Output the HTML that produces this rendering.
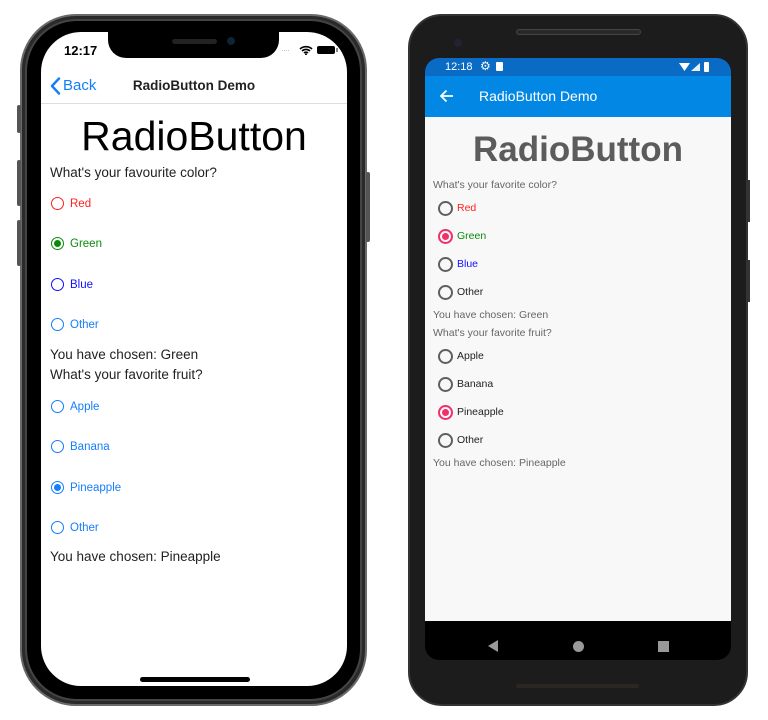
<!DOCTYPE html>
<html><head><meta charset="utf-8"><style>
*{margin:0;padding:0;box-sizing:border-box}
body{width:768px;height:720px;background:#fff;position:relative;overflow:hidden;font-family:"Liberation Sans",Arial,sans-serif}
.a{position:absolute;white-space:nowrap}
.r{position:absolute;border-radius:50%}
</style></head><body>
<!-- iPhone -->
<div class="a" style="left:20px;top:14px;width:347px;height:692px;border-radius:56px;background:#2a2a2a;border:2px solid #6a6a6a"></div>
<div class="a" style="left:25px;top:19px;width:337px;height:682px;border-radius:52px;background:#000;border:2px solid #444"></div>
<div class="a" style="left:17px;top:105px;width:4px;height:28px;background:#555;border-radius:2px"></div>
<div class="a" style="left:17px;top:160px;width:4px;height:46px;background:#555;border-radius:2px"></div>
<div class="a" style="left:17px;top:220px;width:4px;height:46px;background:#555;border-radius:2px"></div>
<div class="a" style="left:366px;top:172px;width:4px;height:70px;background:#555;border-radius:2px"></div>
<div class="a" style="left:41px;top:32px;width:306px;height:654px;border-radius:40px;background:#fff;overflow:hidden">
 <div class="a" style="left:67px;top:-2px;width:171px;height:28px;background:#000;border-radius:0 0 18px 18px"></div>
 <div class="a" style="left:131px;top:7px;width:45px;height:5px;background:#222;border-radius:3px"></div>
 <div class="a" style="left:186px;top:5px;width:8px;height:8px;background:#123;border-radius:50%"></div>
 <div class="a" style="left:23px;top:11px;font-size:13px;font-weight:bold">12:17</div>
 <div class="a" style="left:240px;top:13px;font-size:9px;color:#bbb;letter-spacing:-1px">····</div>
 <svg class="a" style="left:258px;top:13px" width="14" height="10" viewBox="0 0 14 10"><path d="M1 4a9 9 0 0 1 12 0M3 6a6 6 0 0 1 8 0M5 8a3 3 0 0 1 4 0" stroke="#000" stroke-width="1.6" fill="none"/><circle cx="7" cy="9.3" r="1" fill="#000"/></svg>
 <div class="a" style="left:276px;top:14px;width:18px;height:8px;background:#000;border-radius:2px"></div>
 <div class="a" style="left:295px;top:16px;width:2px;height:4px;background:#888"></div>
 <svg class="a" style="left:8px;top:45px" width="12" height="18"><path d="M10 1.5L3 9l7 7.5" stroke="#147efb" stroke-width="2.4" fill="none" stroke-linecap="round" stroke-linejoin="round"/></svg>
 <div class="a" style="left:22px;top:45px;font-size:15px;color:#147efb">Back</div>
 <div class="a" style="left:0;width:306px;text-align:center;top:46px;font-size:13.5px;font-weight:bold;color:#222">RadioButton Demo</div>
 <div class="a" style="left:0;top:71px;width:306px;height:1px;background:#ddd"></div>
 <div class="a" style="left:0;width:306px;text-align:center;top:80px;font-size:41px;line-height:48px;color:#000">RadioButton</div>
 <div class="a" style="left:9px;top:133px;font-size:13.5px;color:#222">What's your favourite color?</div>
</div>
<!-- iOS radios (page coords) -->
<div class="r" style="left:51px;top:197px;width:13px;height:13px;border:1.7px solid #ff2020"></div>
<div class="a" style="left:70px;top:198px;font-size:11.5px;color:#ff2020">Red</div>
<div class="r" style="left:51px;top:237px;width:13px;height:13px;border:1.7px solid #0a8a0a"></div><div class="r" style="left:54px;top:240px;width:7px;height:7px;background:#0a8a0a"></div>
<div class="a" style="left:70px;top:238px;font-size:11.5px;color:#0a8a0a">Green</div>
<div class="r" style="left:51px;top:278px;width:13px;height:13px;border:1.7px solid #1010ff"></div>
<div class="a" style="left:70px;top:279px;font-size:11.5px;color:#1010ff">Blue</div>
<div class="r" style="left:51px;top:318px;width:13px;height:13px;border:1.7px solid #147efb"></div>
<div class="a" style="left:70px;top:319px;font-size:11.5px;color:#147efb">Other</div>
<div class="a" style="left:50px;top:347px;font-size:13.5px;color:#222">You have chosen: Green</div>
<div class="a" style="left:50px;top:367px;font-size:13.5px;color:#222">What's your favorite fruit?</div>
<div class="r" style="left:51px;top:400px;width:13px;height:13px;border:1.7px solid #147efb"></div>
<div class="a" style="left:70px;top:401px;font-size:11.5px;color:#147efb">Apple</div>
<div class="r" style="left:51px;top:440px;width:13px;height:13px;border:1.7px solid #147efb"></div>
<div class="a" style="left:70px;top:441px;font-size:11.5px;color:#147efb">Banana</div>
<div class="r" style="left:51px;top:481px;width:13px;height:13px;border:1.7px solid #147efb"></div><div class="r" style="left:54px;top:484px;width:7px;height:7px;background:#147efb"></div>
<div class="a" style="left:70px;top:482px;font-size:11.5px;color:#147efb">Pineapple</div>
<div class="r" style="left:51px;top:521px;width:13px;height:13px;border:1.7px solid #147efb"></div>
<div class="a" style="left:70px;top:522px;font-size:11.5px;color:#147efb">Other</div>
<div class="a" style="left:50px;top:549px;font-size:13.5px;color:#222">You have chosen: Pineapple</div>
<div class="a" style="left:140px;top:677px;width:110px;height:5px;background:#000;border-radius:3px"></div>

<!-- Android -->
<div class="a" style="left:408px;top:14px;width:340px;height:692px;border-radius:34px;background:#1c1c1c;border:2px solid #333"></div>
<div class="a" style="left:746px;top:180px;width:4px;height:42px;background:#333"></div>
<div class="a" style="left:746px;top:260px;width:4px;height:42px;background:#333"></div>
<div class="a" style="left:516px;top:29px;width:125px;height:6px;background:#2a2a2a;border-radius:3px;border:1px solid #444"></div>
<div class="a" style="left:454px;top:39px;width:8px;height:8px;background:#223;border-radius:50%"></div>
<div class="a" style="left:516px;top:684px;width:123px;height:4px;background:#2a2622;border-radius:2px"></div>
<div class="a" style="left:425px;top:58px;width:306px;height:602px;border-radius:14px;background:#000;overflow:hidden">
 <div class="a" style="left:0;top:0;width:306px;height:18px;background:#0a6bc4"></div>
 <div class="a" style="left:20px;top:3px;font-size:11px;color:#fff">12:18</div>
 <div class="a" style="left:55px;top:1px;font-size:12px;color:#fff">⚙</div>
 <div class="a" style="left:71px;top:4px;width:7px;height:9px;background:#fff;border-radius:1px"></div>
 <svg class="a" style="left:254px;top:4px" width="30" height="11"><path d="M0 1h11L5.5 9z" fill="#fff"/><path d="M12 9h9V1z" fill="#fff" opacity=".9"/><rect x="25" y="0" width="5" height="10" rx="1" fill="#fff"/></svg>
 <div class="a" style="left:0;top:18px;width:306px;height:41px;background:#0288e4"></div>
 <svg class="a" style="left:14px;top:30px" width="16" height="16"><path d="M14 8H2M7.5 2.5L2 8l5.5 5.5" stroke="#fff" stroke-width="1.8" fill="none"/></svg>
 <div class="a" style="left:54px;top:30px;font-size:14px;color:#fff">RadioButton Demo</div>
 <div class="a" style="left:0;top:59px;width:306px;height:504px;background:#f8f8f8"></div>
 <svg class="a" style="left:62px;top:581px" width="14" height="14"><path d="M11 1v12L1 7z" fill="#999"/></svg>
 <div class="r" style="left:148px;top:583px;width:11px;height:11px;background:#999"></div>
 <div class="a" style="left:233px;top:583px;width:11px;height:11px;background:#999"></div>
</div>
<div class="a" style="left:425px;top:128px;width:306px;text-align:center;font-size:35px;font-weight:bold;color:#5c5c5c;line-height:44px">RadioButton</div>
<div class="a" style="left:433px;top:179px;font-size:10.5px;color:#666">What's your favorite color?</div>
<div class="r" style="left:438px;top:201px;width:15px;height:15px;border:2px solid #5f5f5f"></div>
<div class="a" style="left:457px;top:202px;font-size:10.5px;color:#ff1f1f">Red</div>
<div class="r" style="left:438px;top:229px;width:15px;height:15px;border:2px solid #f0306a"></div><div class="r" style="left:442px;top:233px;width:7px;height:7px;background:#f0306a"></div>
<div class="a" style="left:457px;top:230px;font-size:10.5px;color:#0a8a0a">Green</div>
<div class="r" style="left:438px;top:257px;width:15px;height:15px;border:2px solid #5f5f5f"></div>
<div class="a" style="left:457px;top:258px;font-size:10.5px;color:#1010ff">Blue</div>
<div class="r" style="left:438px;top:285px;width:15px;height:15px;border:2px solid #5f5f5f"></div>
<div class="a" style="left:457px;top:286px;font-size:10.5px;color:#222">Other</div>
<div class="a" style="left:433px;top:309px;font-size:10.5px;color:#666">You have chosen: Green</div>
<div class="a" style="left:433px;top:327px;font-size:10.5px;color:#666">What's your favorite fruit?</div>
<div class="r" style="left:438px;top:349px;width:15px;height:15px;border:2px solid #5f5f5f"></div>
<div class="a" style="left:457px;top:350px;font-size:10.5px;color:#222">Apple</div>
<div class="r" style="left:438px;top:377px;width:15px;height:15px;border:2px solid #5f5f5f"></div>
<div class="a" style="left:457px;top:378px;font-size:10.5px;color:#222">Banana</div>
<div class="r" style="left:438px;top:405px;width:15px;height:15px;border:2px solid #f0306a"></div><div class="r" style="left:442px;top:409px;width:7px;height:7px;background:#f0306a"></div>
<div class="a" style="left:457px;top:406px;font-size:10.5px;color:#222">Pineapple</div>
<div class="r" style="left:438px;top:433px;width:15px;height:15px;border:2px solid #5f5f5f"></div>
<div class="a" style="left:457px;top:434px;font-size:10.5px;color:#222">Other</div>
<div class="a" style="left:433px;top:457px;font-size:10.5px;color:#666">You have chosen: Pineapple</div>
</body></html>
